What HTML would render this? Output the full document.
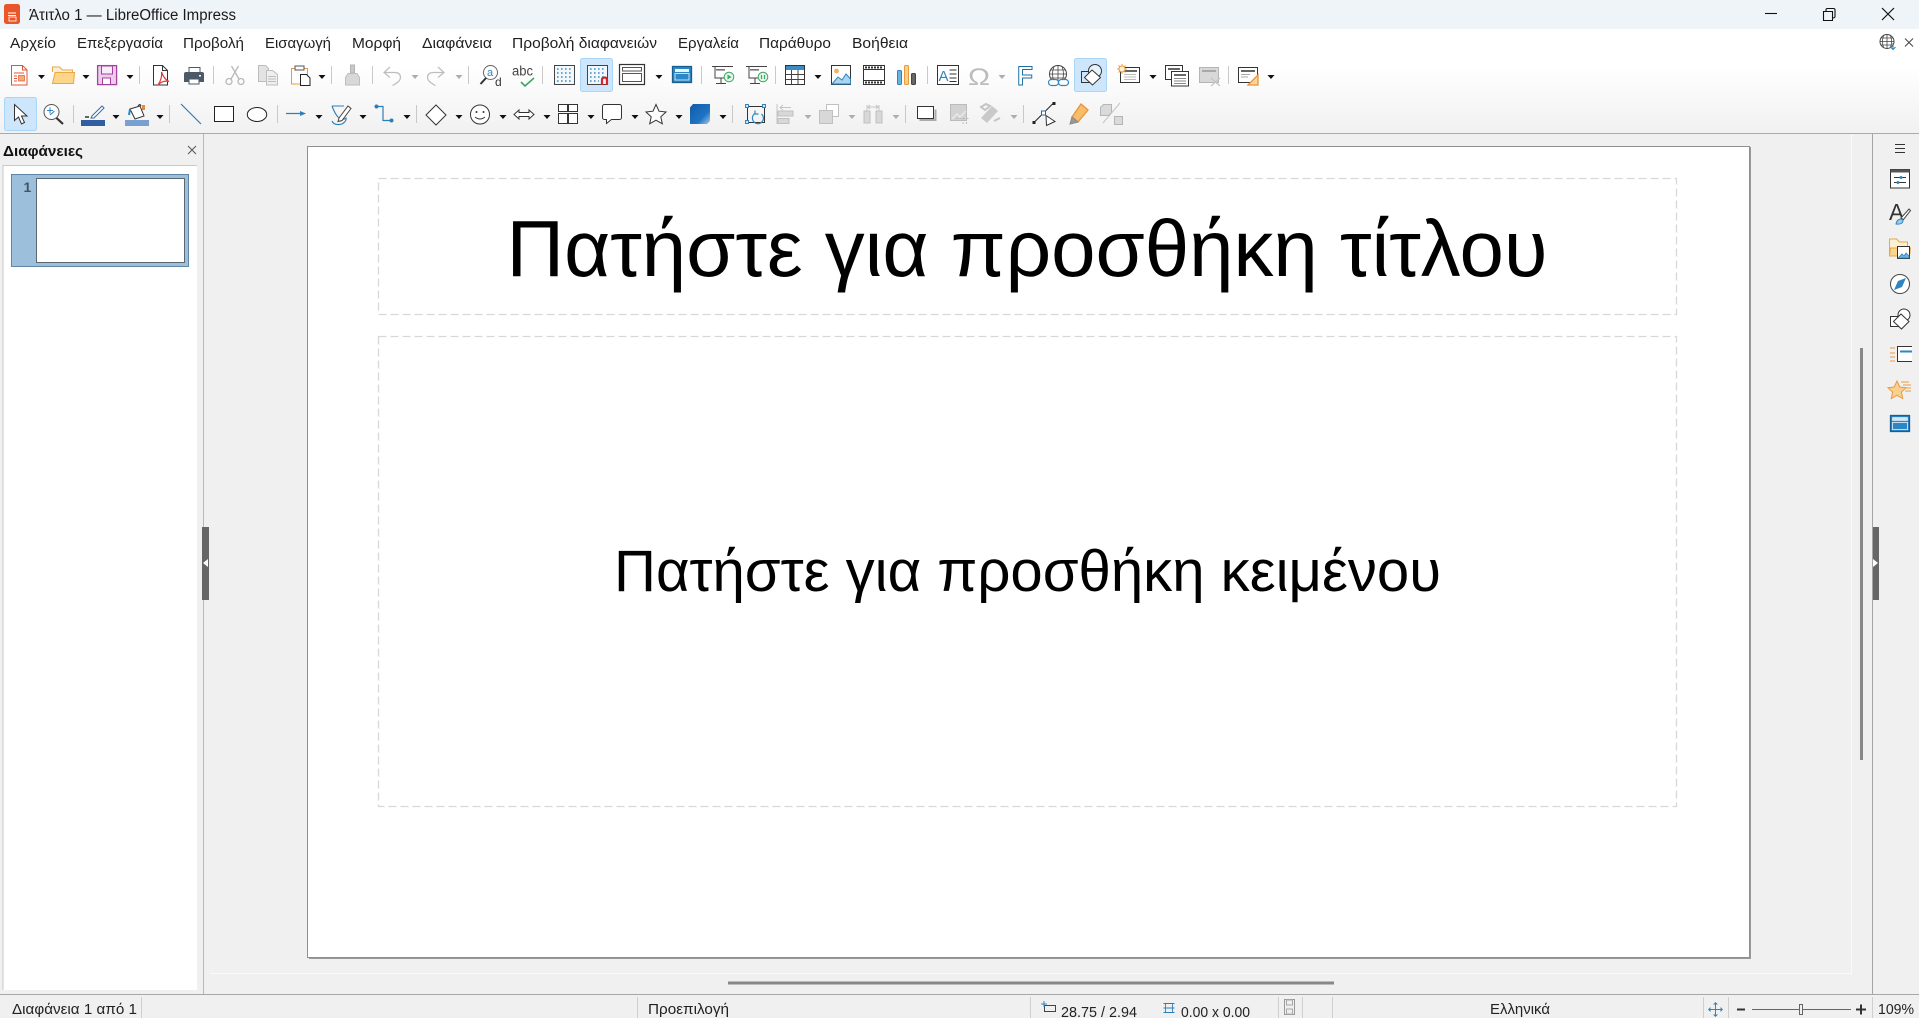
<!DOCTYPE html>
<html lang="el"><head><meta charset="utf-8"><title>Άτιτλο 1 — LibreOffice Impress</title>
<style>
html,body{margin:0;padding:0;width:1919px;height:1018px;overflow:hidden;background:#f0f0f0}
svg{display:block;position:absolute;left:0;top:0}
text{font-family:"Liberation Sans","DejaVu Sans",sans-serif}
.m{font-size:14.5px;fill:#1f1f1f}
.s{font-size:14.5px;fill:#222}
</style></head><body>
<svg width="1919" height="1018" viewBox="0 0 1919 1018" xmlns="http://www.w3.org/2000/svg" fill="none">
<defs><linearGradient id="tb" x1="0" y1="0" x2="0" y2="1"><stop offset="0" stop-color="#fff"/><stop offset=".35" stop-color="#fff"/><stop offset="1" stop-color="#f1f1f1"/></linearGradient></defs>
<!-- base -->
<rect width="1919" height="1018" fill="#f0f0f0"/>
<rect width="1919" height="29" fill="#eff4f9"/>
<rect y="29" width="1919" height="104" fill="url(#tb)"/>
<rect y="133" width="1919" height="1" fill="#ababab"/>
<!-- title bar -->
<rect x="4" y="4" width="16" height="20" rx="2.5" fill="#e8562a"/>
<path d="M8 13h8M8 15.5h8" stroke="#fff"/><rect x="9" y="17" width="7" height="4" fill="none" stroke="#fff" stroke-width=".8"/>
<text x="29" y="20" font-size="15.5" fill="#1a1a1a" textLength="207" lengthAdjust="spacingAndGlyphs">Άτιτλο 1 — LibreOffice Impress</text>
<path d="M1765 13.5h12" stroke="#111" stroke-width="1.1"/>
<path d="M1823.5 11.5h9v9h-9zM1826 11v-1.2q0-1.3 1.5-1.3h6q1.5 0 1.5 1.5v6.5q0 1.5-2.5 1.5" stroke="#111" stroke-width="1.1"/>
<path d="M1882 8l12 12M1894 8l-12 12" stroke="#111" stroke-width="1.2"/>
<!-- menu -->
<g class="m">
<text class="m" x="10" y="48" textLength="46" lengthAdjust="spacingAndGlyphs">Αρχείο</text>
<text class="m" x="77" y="48" textLength="86" lengthAdjust="spacingAndGlyphs">Επεξεργασία</text>
<text class="m" x="183" y="48" textLength="61" lengthAdjust="spacingAndGlyphs">Προβολή</text>
<text class="m" x="265" y="48" textLength="66" lengthAdjust="spacingAndGlyphs">Εισαγωγή</text>
<text class="m" x="352" y="48" textLength="49" lengthAdjust="spacingAndGlyphs">Μορφή</text>
<text class="m" x="422" y="48" textLength="70" lengthAdjust="spacingAndGlyphs">Διαφάνεια</text>
<text class="m" x="512" y="48" textLength="145" lengthAdjust="spacingAndGlyphs">Προβολή διαφανειών</text>
<text class="m" x="678" y="48" textLength="61" lengthAdjust="spacingAndGlyphs">Εργαλεία</text>
<text class="m" x="759" y="48" textLength="72" lengthAdjust="spacingAndGlyphs">Παράθυρο</text>
<text class="m" x="852" y="48" textLength="56" lengthAdjust="spacingAndGlyphs">Βοήθεια</text>
</g>
<!-- globe + close -->
<circle cx="1887" cy="41.5" r="7" stroke="#444"/><path d="M1880 41.5h14M1881 38h12M1881 45h12M1887 34.500v14M1883.500 35.500q-2 6 0 12M1890.500 35.500q2 6 0 12" stroke="#444" stroke-width=".8"/>
<path d="M1893 43v6M1890.500 47l2.500 2.500 2.500-2.500" stroke="#2e86c1"/>
<path d="M1905 38.500l8 8M1913 38.500l-8 8" stroke="#444"/>
<!-- highlighted buttons -->
<rect x="580.500" y="58.500" width="32" height="33" rx="2" fill="#cde6fb" stroke="#a9d5f6"/>
<rect x="1074.500" y="58.500" width="32" height="33" rx="2" fill="#cde6fb" stroke="#a9d5f6"/>
<rect x="4.500" y="97.500" width="32" height="33" rx="2" fill="#cde6fb" stroke="#a9d5f6"/>
<!-- separators -->
<path d="M139.500 66v18M213.500 66v18M331.500 66v18M372.500 66v18M468.500 66v18M542.500 66v18M701.500 66v18M775.500 66v18M927.500 66v18M1228.500 66v18M73.500 105v18M169.500 105v18M277.500 105v18M416.500 105v18M732.500 105v18M905.500 105v18M1023.500 105v18" stroke="#c9c9c9"/>
<!-- dropdown arrows -->
<path fill="#111" d="M38 75h7l-3.500 4zM82.500 75h7l-3.500 4zM126.500 75h7l-3.500 4zM318.500 75h7l-3.500 4zM655.500 75h7l-3.500 4zM814.500 75h7l-3.500 4zM1149.500 75h7l-3.500 4zM1267.500 75h7l-3.500 4zM112.500 115h7l-3.500 4zM156.500 115h7l-3.500 4zM315.500 115h7l-3.500 4zM359.500 115h7l-3.500 4zM403.500 115h7l-3.500 4zM455.500 115h7l-3.500 4zM499.500 115h7l-3.500 4zM543.500 115h7l-3.500 4zM587.500 115h7l-3.500 4zM631.500 115h7l-3.500 4zM675.500 115h7l-3.500 4zM719.500 115h7l-3.500 4z"/>
<path fill="#adadad" d="M411.500 75h7l-3.500 4zM455.500 75h7l-3.500 4zM998.500 75h7l-3.500 4zM804.500 115h7l-3.500 4zM848.500 115h7l-3.500 4zM892.500 115h7l-3.500 4zM1010.500 115h7l-3.500 4z"/>

<!-- ROW 1 ICONS -->
<!-- new -->
<path d="M11.500 65.500h11l4.500 4.500v15h-15.500z" fill="#fff" stroke="#e0563a"/><path d="M22.500 65.500v4.500h4.500" stroke="#e0563a"/><path d="M14 73h10M14 76h3M14 78.500h3M14 81h3" stroke="#e0563a"/><rect x="18.500" y="75.500" width="6" height="5.500" fill="#f3b06a" stroke="#e0563a" stroke-width=".7"/>
<!-- open -->
<path d="M52.500 72v-5h7l3 3h10v3" fill="#fdf0d0" stroke="#e9a745"/><path d="M52.500 83.500l2.500-11h19.500l-1 11z" fill="#fad58a" stroke="#e9a745"/>
<!-- save -->
<rect x="97.600" y="65.600" width="19" height="19" fill="#eccdec" stroke="#a3429f" stroke-width="1.3"/><rect x="101.500" y="66" width="11" height="8" fill="#f9ecf9" stroke="#a3429f"/><rect x="102.500" y="78" width="8" height="6.500" fill="#fff" stroke="#a3429f"/>
<!-- pdf -->
<path d="M153.500 65.500h9l5 5v14.500h-14z" fill="#fff" stroke="#333"/><path d="M162.500 65.500v5h5" stroke="#333"/><path d="M161.500 72q1 6-3.500 13q5-5 11-3.500q-5-2.500-7.500-9.500z" stroke="#e23b3b" stroke-width="1.200" fill="none"/>
<!-- print -->
<rect x="189" y="67.500" width="11" height="6" fill="#fff" stroke="#4b5a66"/><path d="M184 74q0-2 2-2h16q2 0 2 2v8h-20z" fill="#4b5a66"/><rect x="189" y="79" width="10" height="5" fill="#fff" stroke="#4b5a66"/><rect x="199" y="75" width="2" height="1.500" fill="#fff"/>
<!-- cut -->
<g stroke="#b9b9b9" stroke-width="1.300"><circle cx="229" cy="81.500" r="3"/><circle cx="241" cy="81.500" r="3"/><path d="M231 79l7.500-13M239 79l-7.500-13"/></g>
<!-- copy -->
<path d="M258.500 65.500h7l3 3v13h-10z" fill="#e3e3e3" stroke="#bdbdbd"/><path d="M266.500 70.500h6l5 4v10.500h-11z" fill="#efefef" stroke="#bdbdbd"/><path d="M268 76.500h8M268 79h8M268 81.500h8" stroke="#bdbdbd"/>
<!-- paste -->
<path d="M291.500 68.500h16v15.500h-16z" fill="#fff" stroke="#ea9a3d"/><rect x="295" y="66" width="9" height="4" fill="#fff" stroke="#555"/><path d="M300.500 74.500h6l3.500 3.500v7.500h-9.500z" fill="#fff" stroke="#222"/>
<!-- clone -->
<path d="M350.500 65h4v8h-4z" fill="#c8c8c8" stroke="#b5b5b5"/><path d="M348 73.500h9l2.500 4v7.500h-14v-7.500z" fill="#d8d8d8" stroke="#bdbdbd"/>
<!-- undo redo -->
<path d="M390 67l-6 5.500 6 5M384.500 72.500h10q6 0 6 5q0 4-8 8" stroke="#bdbdbd" stroke-width="1.200"/>
<path d="M438 67l6 5.500-6 5M443.500 72.500h-10q-6 0-6 5q0 4 8 8" stroke="#bdbdbd" stroke-width="1.200"/>
<!-- find -->
<circle cx="490.500" cy="72.500" r="7" fill="#fff" stroke="#666"/><path d="M486 78l-5.500 6" stroke="#333" stroke-width="2"/>
<text x="487" y="76" font-size="11" fill="#2e86c1">a</text><text x="495" y="86" font-size="12" fill="#333">d</text>
<!-- spell -->
<text x="512" y="75.500" font-size="13.500" fill="#444" textLength="21" lengthAdjust="spacingAndGlyphs">abc</text>
<path d="M521 82l4 4 9-8" stroke="#3fa865" stroke-width="1.700"/>
<!-- grid -->
<g id="g1"><rect x="554.500" y="65.500" width="20" height="19" fill="#f2f7fb" stroke="#444"/>
<path d="M557 69h16M557 73h16M557 77h16M557 81h16" stroke="#3a8dc4" stroke-width="1.600" stroke-dasharray="1.600 2.400"/></g>
<!-- snap grid -->
<rect x="587.500" y="65.500" width="20" height="19" fill="#f2f7fb" stroke="#444"/>
<path d="M590 69h16M590 73h16M590 77h16M590 81h9" stroke="#3a8dc4" stroke-width="1.600" stroke-dasharray="1.600 2.400"/>
<path d="M602 85v-5q0-2.500 2.500-2.500t2.500 2.500v5" stroke="#d5232a" stroke-width="2.200"/>
<!-- master view -->
<rect x="619.500" y="64.500" width="25" height="20" fill="#fff" stroke="#333" stroke-width="1.200"/><rect x="622.500" y="67.500" width="19" height="3.500" fill="#fff" stroke="#555"/><rect x="622.500" y="73.500" width="19" height="8" fill="#fff" stroke="#555"/>
<!-- slide -->
<rect x="672.500" y="66.500" width="19" height="16" fill="#2b87c6" stroke="#185f8f" stroke-width="1.300"/><rect x="675" y="69" width="14" height="3" fill="#eaf4fb"/><rect x="675" y="73.500" width="14" height="6.500" fill="#2b87c6" stroke="#eaf4fb" stroke-width=".8"/>
<!-- presentation -->
<path d="M712 66.500h21M715 67v11h10" stroke="#444"/><rect x="716" y="69" width="9" height="1.600" fill="#777"/><path d="M721 78v5M716 83.500h10" stroke="#444"/><circle cx="729" cy="77" r="4.800" fill="#e5f5ea" stroke="#3fa865"/><path d="M727.500 74.500v5l4-2.500z" fill="#3fa865"/>
<path d="M746 66.500h21M749 67v11h10" stroke="#444"/><rect x="750" y="69" width="9" height="1.600" fill="#777"/><path d="M755 78v5M750 83.500h10" stroke="#444"/><circle cx="763" cy="77" r="4.800" fill="#e5f5ea" stroke="#3fa865"/><path d="M761.500 75v4M764.500 75v4" stroke="#3fa865" stroke-width="1.200"/>
<!-- table -->
<rect x="785.500" y="65.500" width="19" height="19" fill="#fff" stroke="#333"/><rect x="786" y="66" width="18" height="4" fill="#3a8dc4"/><path d="M786 74.500h18M786 79.500h18M791.500 70v14M798 70v14" stroke="#444"/>
<!-- image -->
<rect x="831.500" y="65.500" width="19" height="19" fill="#fff" stroke="#333"/><circle cx="836.500" cy="71" r="2" fill="#f5b55f" stroke="#e9993a" stroke-width=".6"/><path d="M832 84l6-7 4 3 4-6 4.500 5v5z" fill="#a9d3ef" stroke="#2e86c1"/>
<!-- media -->
<rect x="863.500" y="65.500" width="21" height="19" fill="#fff" stroke="#333"/><path d="M865 67.500h18M865 82.500h18" stroke="#333" stroke-width="2" stroke-dasharray="2 1"/><path d="M864 69.500h20M864 80.500h20" stroke="#333"/>
<!-- chart -->
<rect x="897.500" y="70.500" width="4" height="14" rx="1" fill="#6db2df" stroke="#2e86c1"/><rect x="904.500" y="65.500" width="4" height="19" rx="1" fill="#f9cf8f" stroke="#ea9a3d"/><rect x="911.500" y="73.500" width="4" height="11" rx="1" fill="#666" stroke="#444"/>
<!-- textbox -->
<rect x="937.500" y="65.500" width="21" height="19" fill="#fff" stroke="#333"/><text x="938.500" y="81" font-size="15" fill="#2e86c1">A</text><path d="M949.500 70h7M949.500 74h7M949.500 78h7M949.500 81.500h7" stroke="#333"/>
<!-- omega -->
<text x="968" y="85" font-size="24" fill="#bcbcbc" textLength="22" lengthAdjust="spacingAndGlyphs">Ω</text>
<!-- fontwork -->
<text x="1017" y="85" font-size="27" font-weight="bold" fill="#fff" stroke="#1d6fa5" stroke-width="1" textLength="16" lengthAdjust="spacingAndGlyphs">F</text>
<!-- hyperlink -->
<circle cx="1058" cy="74" r="8.500" fill="#fff" stroke="#444"/><path d="M1049.500 74h17M1051 70h14M1051 78h14M1058 65.500v17M1054 66.500q-3 7.500 0 15M1062 66.500q3 7.500 0 15" stroke="#444" stroke-width=".8"/>
<rect x="1048.500" y="79.500" width="10" height="6" rx="3" fill="#fff" stroke="#2e86c1" stroke-width="1.200"/><rect x="1058.500" y="79.500" width="10" height="6" rx="3" fill="#fff" stroke="#2e86c1" stroke-width="1.200"/>
<!-- shapes (highlight) -->
<rect x="1081.500" y="71.500" width="13" height="11" fill="none" stroke="#333"/><circle cx="1095" cy="71" r="6.500" fill="#e6f2fc" stroke="#333"/><path d="M1092 70l8.500 7.500-8 7.500-8-7.500z" fill="#fff" stroke="#333"/>
<!-- new slide -->
<rect x="1120.500" y="67.500" width="19" height="15" fill="#fff" stroke="#333"/><rect x="1123" y="70" width="14" height="2" fill="#666"/><path d="M1124 74.500h12M1124 77h12M1124 79.500h12" stroke="#bbb"/>
<circle cx="1122" cy="69" r="3" fill="#fff3e0" stroke="#ea9a3d"/><path d="M1122 64v2M1122 72v2M1117 69h2M1125 69h2M1118.500 65.500l1.500 1.500M1124 71l1.500 1.500M1125.500 65.500L1124 67M1120 71l-1.500 1.500" stroke="#ea9a3d"/>
<!-- duplicate -->
<rect x="1165.500" y="65.500" width="17" height="14" fill="#fff" stroke="#333"/><rect x="1168" y="68" width="12" height="2" fill="#666"/><rect x="1171.500" y="71.500" width="17" height="14.500" fill="#fff" stroke="#333"/><rect x="1174" y="74" width="12" height="2" fill="#666"/><path d="M1174 78.500h12M1174 81h12M1174 83.500h12" stroke="#888"/>
<!-- delete slide -->
<rect x="1199.500" y="67.500" width="19" height="15" fill="#d8d8d8" stroke="#b5b5b5"/><rect x="1202" y="70" width="14" height="2" fill="#a8a8a8"/><path d="M1211 78l9 8M1220 78l-9 8" stroke="#c4c4c4" stroke-width="1.200"/>
<!-- layout -->
<rect x="1238.500" y="67.500" width="19" height="15" fill="#fff" stroke="#333"/><rect x="1241" y="70" width="14" height="2" fill="#666"/><path d="M1241 74.500h9M1241 77h7" stroke="#aaa"/>
<path d="M1248 85l10-10v10z" fill="#fbd79a" stroke="#e9943a" stroke-width="1.300"/>

<!-- ROW 2 ICONS -->
<!-- select -->
<path d="M14.500 104.500v16l4-3.500 3 7 3-1.500-3-6.500h5.500z" fill="#fff" stroke="#333"/>
<!-- zoom pan -->
<circle cx="51.500" cy="112" r="7.500" fill="#fff" stroke="#555"/><path d="M56.500 118l6.500 6" stroke="#333" stroke-width="2.200"/><path d="M47 110.500h6M50 107.500v6M50 115l4.500-4" stroke="#2e86c1"/>
<!-- line color -->
<rect x="81" y="120" width="24" height="6" fill="#2f5f9e"/><path d="M85 117h4" stroke="#333" stroke-width="1.500"/>
<path d="M92 116l10-10 2 2-10 10-3 0z" fill="#fff" stroke="#3a6aa8"/>
<!-- fill color -->
<rect x="125" y="120" width="24" height="6" fill="#7a9fd1"/>
<path d="M130 109l10-3 4 10-9 3z" fill="#fff" stroke="#333"/><path d="M130 109l-1 6" stroke="#2e86c1" stroke-width="2"/><path d="M138 106q2-3 3 0" stroke="#333"/><path d="M142 105h3v5h-3z" fill="#e78b3a"/>
<!-- line -->
<path d="M181 104l20 20" stroke="#2e7fb8" stroke-width="1.200"/>
<!-- rect / ellipse -->
<rect x="214.500" y="106.500" width="19" height="15" fill="#fff" stroke="#222"/>
<ellipse cx="257" cy="114.500" rx="9.700" ry="7" fill="#fff" stroke="#222"/>
<!-- arrow line -->
<path d="M286 113.500h18" stroke="#2e7fb8" stroke-width="1.200"/><path d="M306 113.500l-6-2.500v5z" fill="#2e7fb8"/>
<!-- freeform -->
<path d="M332 106h12M332 106q3 8 6 11 5 4 8 1q1 3-4 6-8 2-10-3" stroke="#2e7fb8" stroke-width="1.100"/><path d="M339 118l9-12 3 2.500-9 12-4 1z" fill="#fff" stroke="#444"/>
<!-- connector -->
<path d="M377 106.500h6v14h9" stroke="#2e7fb8" stroke-width="1.200"/><circle cx="376.500" cy="106.500" r="2" fill="#2e7fb8"/><circle cx="391.500" cy="120.500" r="2" fill="#2e7fb8"/>
<!-- diamond -->
<path d="M436 105l10 10-10 10-10-10z" fill="#fff" stroke="#333"/>
<!-- smiley -->
<circle cx="480" cy="114.500" r="9.500" fill="#fff" stroke="#333"/><circle cx="476.500" cy="112" r="1" fill="#333"/><circle cx="483.500" cy="112" r="1" fill="#333"/><path d="M475 117q5 4 10 0" stroke="#333"/>
<!-- double arrow -->
<path d="M514 114.500l5-4.500v2.500h10v-2.500l5 4.500-5 4.500v-2.500h-10v2.500z" fill="#fff" stroke="#333"/>
<!-- flowchart -->
<rect x="558.500" y="104.500" width="9" height="7" fill="#fff" stroke="#333"/><rect x="568.500" y="104.500" width="9" height="7" fill="#fff" stroke="#333"/><rect x="558.500" y="113.500" width="9" height="10" fill="#fff" stroke="#333"/><rect x="568.500" y="113.500" width="9" height="10" fill="#fff" stroke="#333"/>
<!-- callout -->
<path d="M604.500 104.500h15a2 2 0 0 1 2 2v11a2 2 0 0 1-2 2h-8l-5 4v-4h-2a2 2 0 0 1-2-2v-11a2 2 0 0 1 2-2z" fill="#fff" stroke="#333"/>
<!-- star -->
<path d="M656 104.500l3 6.700 7 .8-5.200 4.800 1.500 7-6.300-3.600-6.300 3.600 1.500-7-5.200-4.800 7-.8z" fill="#fff" stroke="#333"/>
<!-- 3d -->
<defs><linearGradient id="d3" x1="0" y1="0" x2="1" y2="1"><stop offset="0" stop-color="#0f5ba8"/><stop offset=".65" stop-color="#1f74c4"/><stop offset="1" stop-color="#a8c8e8"/></linearGradient></defs>
<path d="M690 107.500l3-3.500h17v17l-3 3h-17z" fill="url(#d3)"/>
<!-- rotate -->
<rect x="747.500" y="106.500" width="17" height="16" stroke="#333"/><g fill="#cfe6f7" stroke="#2e86c1"><rect x="745.500" y="104.500" width="3" height="3"/><rect x="762.500" y="104.500" width="3" height="3"/><rect x="745.500" y="120.500" width="3" height="3"/></g>
<path d="M755 113.500a5.500 5.500 0 1 0 6.500 .5M755 110.500v3.500h3.500" stroke="#2e86c1" stroke-width="1.200"/>
<!-- align -->
<path d="M777 104v20" stroke="#c4c4c4"/><rect x="778" y="111" width="15" height="5" fill="#d8d8d8" stroke="#c0c0c0"/><rect x="778" y="118.500" width="11" height="5" fill="#d8d8d8" stroke="#c0c0c0"/><path d="M780 107.500h11M783 105l-3 2.500 3 2.500" stroke="#c4c4c4"/>
<!-- arrange -->
<rect x="826.500" y="104.500" width="12" height="12" fill="#fff" stroke="#c0c0c0"/><rect x="819.500" y="110.500" width="13" height="13" fill="#d8d8d8" stroke="#c0c0c0"/>
<!-- distribute -->
<rect x="864" y="111" width="6" height="12" fill="#d8d8d8" stroke="#c0c0c0"/><rect x="876" y="111" width="6" height="12" fill="#d8d8d8" stroke="#c0c0c0"/><path d="M867 105v6M879 105v6M868 107h10M870 105l-2 2 2 2M876 105l2 2-2 2" stroke="#c4c4c4"/>
<!-- shadow -->
<rect x="917.500" y="106.500" width="16" height="12" fill="#fff" stroke="#333"/><path d="M935.500 109.500v10.500h-16" stroke="#aaa" stroke-width="2"/>
<!-- crop -->
<rect x="950.500" y="104.500" width="16" height="16" fill="#d2d2d2" stroke="#bbb"/><path d="M952 119l5-5 3 3 6-6" stroke="#e8e8e8" stroke-width="1.500"/><path d="M966.500 104.500v20M956 118.500h14M963 118.500v6.500" stroke="#bbb" stroke-dasharray="2 1.500"/>
<!-- filter -->
<path d="M981 118l11-12 6 5-11 12z" fill="#c9c9c9"/><path d="M981 107l5-3 4 2-5 4zM994 121l6-3" stroke="#c4c4c4" stroke-width="2"/>
<!-- points -->
<path d="M1034 122.500l20-20" stroke="#222" stroke-width="1"/><rect x="1032.500" y="121" width="3" height="3" fill="#222"/><rect x="1052.500" y="102" width="3" height="3" fill="#222"/><rect x="1041.500" y="111" width="4" height="4" fill="#fff" stroke="#1d6fa5"/><path d="M1046 115.500l9 6-8.500 4z" fill="#fff" stroke="#333"/>
<!-- glue highlight -->
<path d="M1081 104l7 6-10 12-6-5z" fill="#f8bd6a" stroke="#e9943a" stroke-width="1.300"/><path d="M1072 117l6 5-8 2z" fill="#999" stroke="#888"/>
<!-- extrusion -->
<path d="M1100.500 107.500l3-3h8v8l-3 3h-8z" fill="#dadada" stroke="#b5b5b5"/><path d="M1103 123l17-20" stroke="#c4c4c4"/><rect x="1114.500" y="116.500" width="8" height="8" fill="#dadada" stroke="#b5b5b5"/>

<!-- left pane -->
<rect x="3" y="165" width="194" height="825" fill="#fff"/>
<path d="M3 990V165.500h194" stroke="#c9c9c9" stroke-width="1"/>
<path d="M203.500 134v860" stroke="#b9b9b9"/>
<text x="3" y="156" font-size="14.500" font-weight="bold" fill="#111" textLength="80" lengthAdjust="spacingAndGlyphs">Διαφάνειες</text>
<path d="M188 146l8 8M196 146l-8 8" stroke="#555"/>
<rect x="11.500" y="174.500" width="177" height="92" fill="#9cbfdc" stroke="#5f86a6"/>
<text x="23.500" y="192" font-size="14" font-weight="bold" fill="#3f5568">1</text>
<rect x="36.500" y="178.500" width="148" height="84" fill="#fff" stroke="#5a6874"/>
<!-- handles -->
<rect x="202" y="527" width="7" height="73" fill="#666"/><path d="M208 559v8l-5-4z" fill="#fff"/>
<rect x="1872" y="527" width="7" height="73" fill="#666"/><path d="M1873 559v8l5-4z" fill="#fff"/>
<!-- canvas lines -->
<path d="M210 973.500h1641.500V134" stroke="#fafafa"/>
<path d="M1872.500 134v860" stroke="#a4a4a4"/>
<!-- slide -->
<rect x="309" y="147" width="1442" height="812" fill="#9a9a9a"/>
<rect x="307.500" y="146.500" width="1442" height="811" fill="#fff" stroke="#8f8f8f"/>
<rect x="378.500" y="178.500" width="1298" height="136" stroke="#d8d8d8" stroke-width="1.300" stroke-dasharray="8 4"/>
<rect x="378.500" y="336.500" width="1298" height="470" stroke="#d8d8d8" stroke-width="1.300" stroke-dasharray="8 4"/>
<text x="506.500" y="276" font-size="80" fill="#000" textLength="1041" lengthAdjust="spacingAndGlyphs">Πατήστε για προσθήκη τίτλου</text>
<text x="614" y="591" font-size="58" fill="#000" textLength="827" lengthAdjust="spacingAndGlyphs">Πατήστε για προσθήκη κειμένου</text>
<!-- scrollbars -->
<rect x="1860" y="348" width="3" height="412" fill="#888"/>
<rect x="728" y="981.500" width="606" height="3" fill="#888"/>
<!-- right sidebar -->
<path d="M1895 144.500h10M1895 148.500h10M1895 152.500h10" stroke="#333"/>
<rect x="1890.500" y="169.500" width="19" height="18.500" fill="#fff" stroke="#333"/><rect x="1890.500" y="169.500" width="19" height="3" fill="#555"/><path d="M1894 177.500h12M1894 182.500h12" stroke="#333"/><circle cx="1901" cy="177.500" r="1.500" fill="#2e86c1"/><circle cx="1898" cy="182.500" r="1.500" fill="#2e86c1"/>
<text x="1889" y="220" font-size="23" fill="#333" textLength="15" lengthAdjust="spacingAndGlyphs">A</text>
<path d="M1901 218l8-9 1.500 1.500-7 9z" fill="#fff" stroke="#444"/><path d="M1896 224q1-5 5-5l2 1q0 5-7 4z" fill="#9ccbec" stroke="#2e86c1"/>
<path d="M1889.500 256v-17h7l3 3h8v4" fill="#fdf0d0" stroke="#e9a745"/><path d="M1889.500 256l1-8h20l-1 8z" fill="#fad58a" stroke="#e9a745"/>
<rect x="1897.500" y="246.500" width="12" height="12" fill="#fff" stroke="#333"/><path d="M1898 258l4-4 2 2 2-3 3 3v2z" fill="#6db2df" stroke="#2e86c1" stroke-width=".8"/>
<circle cx="1900" cy="284" r="9.500" fill="#fff" stroke="#444"/><path d="M1906 278l-8 3-4 9 8-3z" fill="#2e86c1"/>
<rect x="1890.500" y="316.500" width="13" height="10" fill="#fff" stroke="#333"/><circle cx="1904" cy="315" r="6" fill="#fff" stroke="#333"/><path d="M1901 314l8 7.500-7.500 7.500-8-7.500z" fill="#fff" stroke="#333"/>
<path d="M1890 348h5M1890 353h5M1890 357h5M1890 361h5" stroke="#ea9a3d"/><path d="M1912 346.500h-14.500v15h14.500" fill="#fff" stroke="#333"/><path d="M1900 351.500h12" stroke="#2e86c1" stroke-width="2"/>
<path d="M1897 381l2.800 6 6.200.7-4.600 4.300 1.300 6.500-5.700-3.200-5.700 3.200 1.300-6.500-4.600-4.300 6.200-.7z" fill="#fbcf8e" stroke="#ea9a3d"/><path d="M1901 382h8M1903 385h8M1905 388h6M1905 391h6" stroke="#ea9a3d"/>
<rect x="1890.500" y="415.500" width="19" height="16" fill="#2b87c6" stroke="#185f8f" stroke-width="1.300"/><rect x="1892.500" y="417.500" width="15" height="3" fill="#cfe6f7" stroke="#eaf4fb" stroke-width=".6"/><rect x="1892.500" y="422.500" width="15" height="7" fill="#2b87c6" stroke="#eaf4fb" stroke-width=".8"/>
<!-- status bar -->
<rect y="994" width="1919" height="24" fill="#f0f0f0"/>
<rect y="994" width="1919" height="1" fill="#a8a8a8"/>
<path d="M141.500 997v21M637.500 997v21M1030.500 997v21M1278.500 997v21M1302.500 997v21M1332.500 997v21M1703.500 997v21M1728.500 997v21M1872.500 997v21" stroke="#cfcfcf"/>
<g>
<text class="s" x="12" y="1014" textLength="125" lengthAdjust="spacingAndGlyphs">Διαφάνεια 1 από 1</text>
<text class="s" x="648" y="1014" textLength="81" lengthAdjust="spacingAndGlyphs">Προεπιλογή</text>
<text class="s" x="1061" y="1017" textLength="76" lengthAdjust="spacingAndGlyphs">28.75 / 2.94</text>
<text class="s" x="1181" y="1017" textLength="69" lengthAdjust="spacingAndGlyphs">0.00 x 0.00</text>
<text class="s" x="1490" y="1014" textLength="60" lengthAdjust="spacingAndGlyphs">Ελληνικά</text>
<text class="s" x="1878" y="1014" textLength="36" lengthAdjust="spacingAndGlyphs">109%</text>
</g>
<path d="M1044.500 1005.500h11v6h-11z" stroke="#444"/><path d="M1044 1001v6M1041 1004h6" stroke="#2e86c1"/>
<path d="M1163.500 1003.500h11M1163.500 1008h11M1163.500 1012.500h11M1165.500 1003v10M1172.500 1003v10" stroke="#2e7fb8" stroke-width=".9"/>
<path d="M1284.500 999.500h10v15h-10z" fill="#eee" stroke="#999"/><rect x="1286.500" y="1000" width="6" height="5" stroke="#aaa"/><rect x="1286.500" y="1009" width="6" height="5" stroke="#aaa"/>
<path d="M1715.500 1002.500v14M1708.500 1009.500h14" stroke="#2e86c1"/><path d="M1713 1004.500h5l-2.500-2.500zM1713 1014.500h5l-2.500 2.500zM1710.500 1007v5l-2.500-2.500zM1720.500 1007v5l2.500-2.500z" fill="#2e86c1"/>
<path d="M1737 1009.500h8" stroke="#333" stroke-width="2"/>
<path d="M1752 1009.500h99" stroke="#666"/><rect x="1799.500" y="1004.500" width="3" height="10" fill="#f0f0f0" stroke="#666"/>
<path d="M1856 1009.500h10M1861 1004.500v10" stroke="#333" stroke-width="2"/>
</svg>
</body></html>
